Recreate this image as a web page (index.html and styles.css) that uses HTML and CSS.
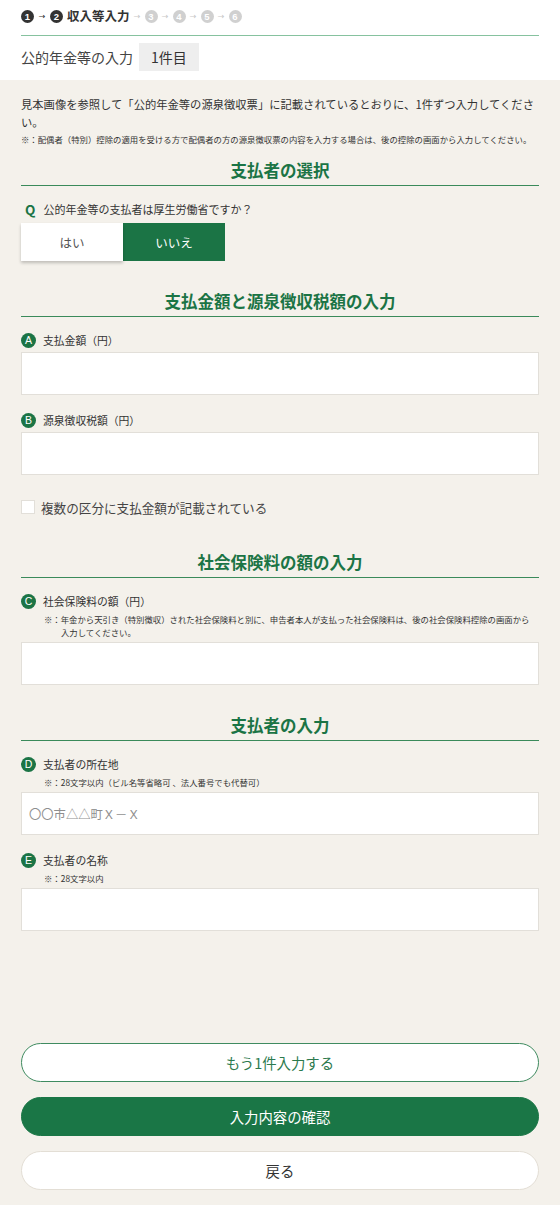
FILE: index.html
```html
<!DOCTYPE html>
<html lang="ja">
<head>
<meta charset="utf-8">
<title>公的年金等の入力</title>
<link rel="stylesheet" href="styles.css">
</head>
<body>
<div class="page">
  <header class="top">
    <div class="steps">
      <span class="num done">1</span><span class="arr">→</span>
      <span class="num done">2</span><span class="step-name">収入等入力</span><span class="arr off">→</span>
      <span class="num off">3</span><span class="arr off">→</span>
      <span class="num off">4</span><span class="arr off">→</span>
      <span class="num off">5</span><span class="arr off">→</span>
      <span class="num off">6</span>
    </div>
    <div class="title-row">
      <h1 class="page-title">公的年金等の入力</h1>
      <span class="count">1件目</span>
    </div>
  </header>

  <main class="content">
    <p class="intro">見本画像を参照して「公的年金等の源泉徴収票」に記載されているとおりに、1件ずつ入力してください。</p>
    <p class="note">※：配偶者（特別）控除の適用を受ける方で配偶者の方の源泉徴収票の内容を入力する場合は、後の控除の画面から入力してください。</p>

    <section class="section first">
      <h2 class="sec-title">支払者の選択</h2>
      <div class="question"><span class="q">Q</span>公的年金等の支払者は厚生労働省ですか？</div>
      <div class="toggle">
        <button class="opt">はい</button>
        <button class="opt active">いいえ</button>
      </div>
    </section>

    <section class="section">
      <h2 class="sec-title">支払金額と源泉徴収税額の入力</h2>
      <div class="field">
        <div class="label"><span class="badge">A</span>支払金額（円）</div>
        <input class="input" type="text">
      </div>
      <div class="field">
        <div class="label"><span class="badge">B</span>源泉徴収税額（円）</div>
        <input class="input" type="text">
      </div>
      <label class="check-row"><span class="box"></span>複数の区分に支払金額が記載されている</label>
    </section>

    <section class="section wide">
      <h2 class="sec-title">社会保険料の額の入力</h2>
      <div class="field">
        <div class="label"><span class="badge">C</span>社会保険料の額（円）</div>
        <p class="hint">※：年金から天引き（特別徴収）された社会保険料と別に、申告者本人が支払った社会保険料は、後の社会保険料控除の画面から入力してください。</p>
        <input class="input" type="text">
      </div>
    </section>

    <section class="section">
      <h2 class="sec-title">支払者の入力</h2>
      <div class="field">
        <div class="label"><span class="badge">D</span>支払者の所在地</div>
        <p class="hint">※：28文字以内（ビル名等省略可 、法人番号でも代替可）</p>
        <input class="input" type="text" placeholder="〇〇市△△町Ｘ－Ｘ">
      </div>
      <div class="field">
        <div class="label"><span class="badge">E</span>支払者の名称</div>
        <p class="hint">※：28文字以内</p>
        <input class="input" type="text">
      </div>
    </section>
  </main>

  <div class="actions">
    <button class="btn outline">もう1件入力する</button>
    <button class="btn primary">入力内容の確認</button>
    <button class="btn plain">戻る</button>
  </div>
</div>
</body>
</html>
```

FILE: styles.css
```css
* { box-sizing: border-box; }
html, body { margin: 0; padding: 0; }
body {
  background: #f4f1eb;
  color: #333;
  font-family: "Noto Sans CJK JP", "Noto Sans", sans-serif;
}
.page {
  min-height: 100vh;
  display: flex;
  flex-direction: column;
}
.top {
  background: #fff;
  padding: 7px 21px 9px;
}
.steps {
  display: flex;
  align-items: center;
  height: 29px;
  padding-bottom: 9px;
  border-bottom: 1px solid #86c29f;
}
.num {
  display: inline-flex;
  align-items: center;
  justify-content: center;
  flex: none;
  width: 13px;
  height: 13px;
  border-radius: 50%;
  font-family: "Liberation Sans", sans-serif;
  font-size: 9.5px;
  font-weight: 700;
  color: #fff;
  line-height: 1;
}
.num.done { background: #333; }
.num.off { background: #d0d0d0; }
.arr {
  font-family: "DejaVu Sans", sans-serif;
  font-size: 8px;
  width: 16px;
  text-align: center;
  color: #333;
  line-height: 1;
}
.arr.off { color: #c8c8c8; width: 15px; }
.step-name {
  font-size: 12.5px;
  font-weight: 700;
  margin-left: 4px;
  line-height: 1;
}
.title-row {
  display: flex;
  align-items: center;
  margin-top: 7px;
  height: 28px;
}
.page-title {
  margin: 0;
  font-size: 14px;
  font-weight: 400;
  color: #444;
}
.count {
  margin-left: 6px;
  height: 28px;
  line-height: 28px;
  padding: 0 12px;
  background: #eeeeee;
  font-size: 14px;
  color: #333;
}
.content {
  padding: 0 21px;
}
.intro {
  margin: 15px 0 0;
  font-size: 11.3px;
  line-height: 18px;
}
.note {
  margin: 1px 0 0;
  font-size: 8.4px;
  line-height: 14px;
}
.section { margin-top: 28px; }
.section.first { margin-top: 12px; }
.section.wide { margin-top: 33px; }
.sec-title {
  margin: 0;
  text-align: center;
  font-size: 16.5px;
  font-weight: 700;
  color: #1b7445;
  line-height: 24px;
  padding-bottom: 3px;
  border-bottom: 1px solid #3a8a5a;
}
.question {
  margin-top: 14px;
  display: flex;
  align-items: center;
  height: 18px;
  font-size: 11px;
  padding-left: 4px;
}
.q {
  color: #1b7445;
  font-weight: 700;
  font-size: 13.5px;
  margin-right: 8px;
}
.toggle {
  display: flex;
  margin-top: 5px;
}
.opt {
  width: 102px;
  height: 38px;
  border: none;
  font-family: inherit;
  font-size: 12.5px;
  background: #fff;
  color: #555;
  padding: 0;
}
.opt:first-child {
  box-shadow: 0 2px 3px rgba(0, 0, 0, 0.22);
  position: relative;
}
.opt.active {
  background: #1b7445;
  color: #fff;
}
.field { margin-top: 14px; }
.section .field + .field { margin-top: 16px; }
.label {
  display: flex;
  align-items: center;
  height: 18px;
  font-size: 10.8px;
}
.badge {
  display: inline-flex;
  align-items: center;
  justify-content: center;
  width: 15px;
  height: 15px;
  border-radius: 50%;
  background: #1b7445;
  color: #fff;
  font-family: "Liberation Sans", sans-serif;
  font-size: 10.5px;
  margin-right: 7px;
  flex: none;
}
.hint {
  margin: 3px 0 2px;
  padding: 0 4px 0 40px;
  text-indent: -17px;
  font-size: 8.4px;
  line-height: 13px;
}
.input {
  display: block;
  width: 100%;
  height: 43px;
  margin-top: 3px;
  border: 1px solid #e2dfd9;
  background: #fff;
  padding: 0 7px;
  font-family: inherit;
  font-size: 12.3px;
  color: #333;
}
.input::placeholder { color: #8e8e8e; }
.check-row {
  display: flex;
  align-items: center;
  margin-top: 22px;
  height: 20px;
  font-size: 12.6px;
  color: #444;
}
.box {
  width: 14px;
  height: 14px;
  background: #fff;
  border: 1px solid #e2dfd9;
  margin-right: 6px;
}
.actions {
  margin-top: auto;
  padding: 0 21px 15px;
  display: flex;
  flex-direction: column;
  gap: 15px;
}
.btn {
  height: 39px;
  border-radius: 20px;
  font-family: inherit;
  font-size: 14.4px;
  padding: 0;
}
.btn.outline {
  background: #fff;
  border: 1.5px solid #3f8b60;
  color: #2c7a4e;
}
.btn.primary {
  background: #1a7646;
  border: 1px solid #1a7646;
  color: #fff;
}
.btn.plain {
  background: #fff;
  border: 1px solid #e3ded5;
  color: #333;
}
```
